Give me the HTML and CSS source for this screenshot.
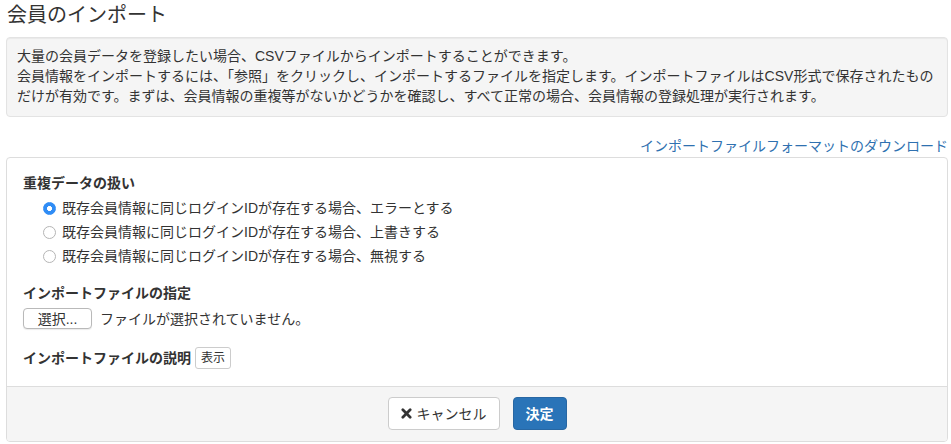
FILE: index.html
```html
<!DOCTYPE html>
<html lang="ja">
<head>
<meta charset="utf-8">
<title>会員のインポート</title>
<link rel="stylesheet" href="styles.css">
</head>
<body>
<div class="page">
  <h1 class="title">会員のインポート</h1>
  <div class="info">
    大量の会員データを登録したい場合、CSVファイルからインポートすることができます。<br>
    会員情報をインポートするには、「参照」をクリックし、インポートするファイルを指定します。インポートファイルはCSV形式で保存されたもの<br>
    だけが有効です。まずは、会員情報の重複等がないかどうかを確認し、すべて正常の場合、会員情報の登録処理が実行されます。
  </div>
  <div class="dl"><a href="#" class="dl-link">インポートファイルフォーマットのダウンロード</a></div>
  <div class="panel">
    <div class="panel-body">
      <div class="label">重複データの扱い</div>
      <div class="radios">
        <label class="radio-row"><span class="radio checked"></span>既存会員情報に同じログインIDが存在する場合、エラーとする</label>
        <label class="radio-row"><span class="radio"></span>既存会員情報に同じログインIDが存在する場合、上書きする</label>
        <label class="radio-row"><span class="radio"></span>既存会員情報に同じログインIDが存在する場合、無視する</label>
      </div>
      <div class="label label-gap">インポートファイルの指定</div>
      <div class="file-row">
        <span class="file-btn">選択...</span>
        <span class="file-status">ファイルが選択されていません。</span>
      </div>
      <div class="desc-row">
        <span class="label">インポートファイルの説明</span>
        <span class="btn-xs">表示</span>
      </div>
    </div>
    <div class="panel-footer">
      <span class="btn btn-default"><svg class="x-icon" viewBox="0 0 12 12" width="11" height="11"><path d="M2 2 L10 10 M10 2 L2 10" stroke="#333" stroke-width="3" stroke-linecap="round"/></svg>キャンセル</span>
      <span class="btn btn-primary">決定</span>
    </div>
  </div>
</div>
</body>
</html>
```
FILE: styles.css
```css
* { box-sizing: border-box; }
body {
  margin: 0;
  font-family: "Liberation Sans", "Noto Sans CJK JP", sans-serif;
  font-size: 14px;
  line-height: 20px;
  color: #333;
  background: #fff;
}
.page {
  padding: 0 3px 0 6px;
}
.title {
  margin: 3px 0 10px 1px;
  font-size: 20px;
  line-height: 24px;
  font-weight: normal;
  color: #333;
}
.info {
  background: #f5f5f5;
  border: 1px solid #e3e3e3;
  border-radius: 4px;
  padding: 8px 10px 10px;
  box-shadow: inset 0 1px 1px rgba(0,0,0,.05);
}
.dl {
  text-align: right;
  margin: 19px 0 1px;
}
.dl-link {
  color: #2f71b0;
  text-decoration: none;
}
.panel {
  border: 1px solid #ddd;
  border-radius: 4px;
  overflow: hidden;
}
.panel-body {
  padding: 15px 16px 17px;
}
.label {
  font-weight: bold;
}
.radios {
  margin: 3px 0 0 0;
}
.radio-row {
  display: flex;
  align-items: center;
  height: 24px;
}
.radio {
  width: 13px;
  height: 13px;
  border-radius: 50%;
  border: 1px solid #b5b5b5;
  background: #fff;
  margin: 0 6px 0 20px;
  flex: none;
}
.radio.checked {
  border-color: #2f8cf5;
  background: radial-gradient(circle, #fff 0 2.2px, #2f8cf5 2.8px);
}
.label-gap {
  margin-top: 15px;
}
.file-row {
  display: flex;
  align-items: center;
  margin-top: 5px;
  height: 21px;
}
.file-btn {
  width: 69px;
  height: 21px;
  border: 1px solid #b9b9b9;
  border-radius: 4px;
  background: #fff;
  box-shadow: 0 1px 1px rgba(0,0,0,.08);
  display: flex;
  align-items: center;
  justify-content: center;
  font-size: 14px;
}
.file-status {
  margin-left: 8px;
}
.desc-row {
  display: flex;
  align-items: center;
  margin-top: 18px;
  height: 22px;
}
.btn-xs {
  margin-left: 4px;
  height: 22px;
  padding: 0 5px;
  border: 1px solid #ccc;
  border-radius: 3px;
  font-size: 12px;
  line-height: 20px;
  background: #fff;
}
.panel-footer {
  background: #f5f5f5;
  border-top: 1px solid #ddd;
  padding: 10px 15px 11px;
  display: flex;
  justify-content: center;
  gap: 13px;
}
.btn {
  height: 33px;
  display: inline-flex;
  align-items: center;
  justify-content: center;
  border-radius: 4px;
  font-size: 14px;
  white-space: nowrap;
  padding: 0;
}
.btn-default {
  width: 112px;
  background: #fff;
  border: 1px solid #ccc;
  color: #333;
}
.x-icon {
  margin-right: 5px;
}
.btn-primary {
  width: 54px;
  background: #2a74b8;
  border: 1px solid #2867a3;
  color: #fff;
  font-weight: bold;
}
```
